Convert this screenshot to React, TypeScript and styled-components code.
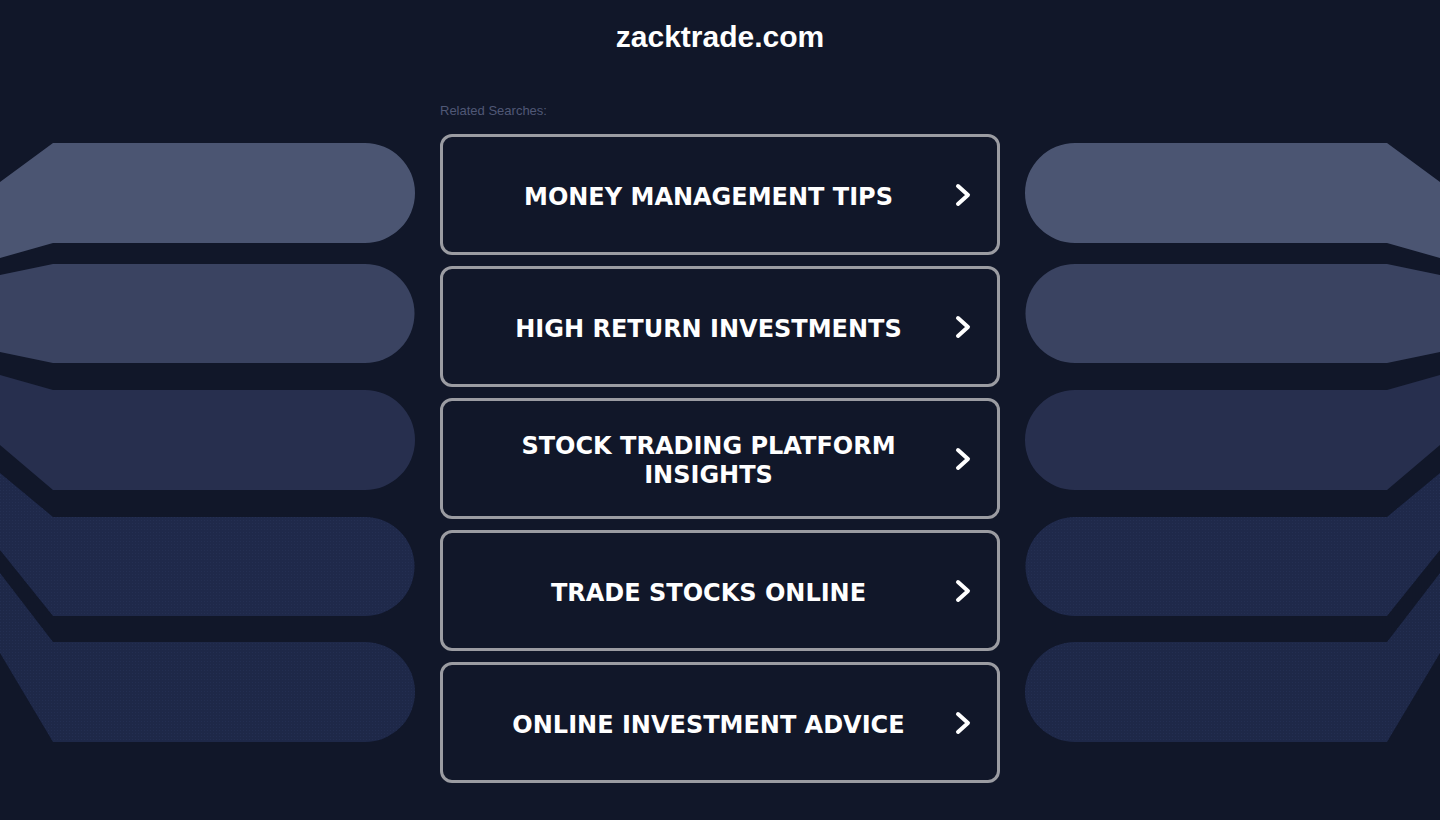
import React from "react";
import styled, { createGlobalStyle } from "styled-components";

const GlobalStyle = createGlobalStyle`
  html, body {
    margin: 0;
    padding: 0;
    background-color: #111729;
  }

  body {
    font-family: "Liberation Sans", Arial, sans-serif;
  }
`;

const Page = styled.div`
  min-height: 820px;
  background-color: #111729;
  overflow: hidden;
`;

const Title = styled.h1`
  margin: 20px 0 0;
  font-family: "Liberation Sans", Arial, sans-serif;
  font-size: 30px;
  line-height: 34px;
  font-weight: 700;
  color: #ffffff;
  text-align: center;
`;

const Body = styled.div`
  display: grid;
  grid-template-columns: 415px 560px 415px;
  column-gap: 25px;
  margin-top: 49px;
`;

const Decor = styled.svg<{ $flip?: boolean }>`
  display: block;
  margin-top: 27px;
  width: 415px;
  height: 620px;
  transform: ${(p) => (p.$flip ? "scaleX(-1)" : "none")};
`;

const Column = styled.div`
  display: flex;
  flex-direction: column;
`;

const Label = styled.div`
  font-family: "Liberation Sans", Arial, sans-serif;
  font-size: 13px;
  line-height: 15px;
  color: #505876;
  margin-bottom: 16px;
`;

const LinkList = styled.div`
  display: flex;
  flex-direction: column;
  gap: 11px;
`;

const SearchLink = styled.a`
  box-sizing: border-box;
  display: flex;
  align-items: center;
  height: 121px;
  padding: 0 26px 0 50px;
  border: 3px solid #9b9ca2;
  border-radius: 12px;
  background-color: #111729;
  text-decoration: none;
  cursor: pointer;
`;

const LinkText = styled.span`
  flex: 1;
  padding-top: 5px;
  font-family: "DejaVu Sans", Verdana, sans-serif;
  font-size: 24px;
  line-height: 29px;
  font-weight: 700;
  color: #ffffff;
  text-align: center;
  text-transform: uppercase;
`;

const Chevron = styled.svg`
  flex: none;
  width: 16px;
  height: 24px;
  margin-left: 31px;
`;

// bands of the side artwork, in page y coordinates: [edge top, top, bottom, edge bottom]
const bands: { y: [number, number, number, number]; fill: string; dotted?: boolean }[] = [
  { y: [182, 143, 243, 258], fill: "#4b5572" },
  { y: [275, 264, 363, 352], fill: "#3a4361" },
  { y: [375, 390, 490, 445], fill: "#272f4e" },
  { y: [473, 517, 616, 550], fill: "#1f294a", dotted: true },
  { y: [573, 642, 742, 653], fill: "#1e2848", dotted: true },
];

const OFFSET = 130;

const bandPath = ([et, t, b, eb]: [number, number, number, number]) => {
  const [a, top, bot, c] = [et - OFFSET, t - OFFSET, b - OFFSET, eb - OFFSET];
  const r = (bot - top) / 2;
  return `M0 ${a} L53 ${top} L365 ${top} A${r} ${r} 0 0 1 365 ${bot} L53 ${bot} L0 ${c} Z`;
};

const SideArt: React.FC<{ flip?: boolean }> = ({ flip }) => {
  const dots = flip ? "dotsR" : "dotsL";
  return (
    <Decor $flip={flip} viewBox="0 0 415 620" aria-hidden="true">
      <defs>
        <pattern id={dots} width="3" height="3" patternUnits="userSpaceOnUse">
          <rect width="1" height="1" fill="#2a3660" opacity="0.4" />
        </pattern>
      </defs>
      {bands.map((band, i) => (
        <g key={i}>
          <path d={bandPath(band.y)} fill={band.fill} />
          {band.dotted && <path d={bandPath(band.y)} fill={`url(#${dots})`} />}
        </g>
      ))}
    </Decor>
  );
};

const searches = [
  "Money Management Tips",
  "High Return Investments",
  "Stock Trading Platform Insights",
  "Trade Stocks Online",
  "Online Investment Advice",
];

const App: React.FC = () => {
  return (
    <>
      <GlobalStyle />
      <Page>
        <Title>zacktrade.com</Title>
        <Body>
          <SideArt />
          <Column>
            <Label>Related Searches:</Label>
            <LinkList>
              {searches.map((s) => (
                <SearchLink key={s}>
                  <LinkText>{s}</LinkText>
                  <Chevron viewBox="0 0 16 24">
                    <polyline
                      points="3,3 13,12 3,21"
                      fill="none"
                      stroke="#ffffff"
                      strokeWidth="4"
                      strokeLinecap="round"
                      strokeLinejoin="round"
                    />
                  </Chevron>
                </SearchLink>
              ))}
            </LinkList>
          </Column>
          <SideArt flip />
        </Body>
      </Page>
    </>
  );
};

export default App;
